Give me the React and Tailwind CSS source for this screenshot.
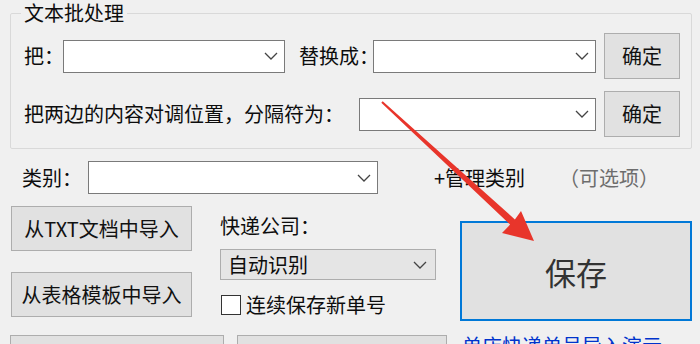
import React from 'react';

const font = { fontFamily: '"Noto Sans CJK SC", "Noto Sans", sans-serif' };

const Chevron = () => (
  <svg width="14" height="8" viewBox="0 0 14 8" className="shrink-0">
    <polyline points="1,1 7,7 13,1" fill="none" stroke="#444" strokeWidth="1.3" />
  </svg>
);

const Combo = ({ className = '' }) => (
  <div className={`shrink-0 h-[33px] bg-white border border-[#7a7a7a] flex items-center justify-end pr-[6px] ${className}`}>
    <Chevron />
  </div>
);

const Btn = ({ children, className = '' }) => (
  <div className={`shrink-0 whitespace-nowrap bg-[#e1e1e1] border border-[#adadad] flex items-center justify-center text-[#111] ${className}`}>
    {children}
  </div>
);

const Arrow = () => (
  <svg className="absolute left-0 top-0 pointer-events-none" width="700" height="344" viewBox="0 0 700 344">
    <polygon
      points="381.3,102.7 510.1,224.6 502,233 534,241 521,211 514.9,219.4 382.7,101.3"
      fill="#e8352b"
    />
  </svg>
);

export default function App() {
  return (
    <div className="relative w-[700px] h-[344px] overflow-hidden bg-[#f0f0f0] text-[20px] leading-none text-[#0d0d0d] whitespace-nowrap" style={font}>
      {/* group box */}
      <fieldset className="ml-[10px] mr-[8px] border border-[#d9d9d9] rounded-[2px] pl-[13px] pr-[11px] pb-[11px]">
        <legend className="px-[3px] ml-[-3px] text-[20px] leading-[26px]">文本批处理</legend>
        <div className="flex items-center h-[46px] mt-[7px]">
          <span className="w-[39px] shrink-0">把：</span>
          <Combo className="w-[222px]" />
          <span className="ml-[14px] w-[74px] shrink-0">替换成：</span>
          <Combo className="w-[223px]" />
          <Btn className="ml-[8px] w-[76px] h-[46px]">确定</Btn>
        </div>
        <div className="flex items-center h-[46px] mt-[12px]">
          <span className="w-[335px] shrink-0">把两边的内容对调位置，分隔符为：</span>
          <Combo className="w-[237px]" />
          <Btn className="ml-[8px] w-[76px] h-[46px]">确定</Btn>
        </div>
      </fieldset>

      {/* category row */}
      <div className="flex items-center h-[33px] mt-[12px] ml-[22px]">
        <span className="w-[66px] shrink-0">类别：</span>
        <Combo className="w-[290px]" />
        <span className="ml-[56px]">+管理类别</span>
        <span className="ml-[34px] text-[#6d6d6d]">（可选项）</span>
      </div>

      {/* middle */}
      <div className="flex items-start mt-[12px]">
        <div className="ml-[11px] w-[181px] shrink-0 flex flex-col gap-[21px]">
          <Btn className="h-[45px]">从TXT文档中导入</Btn>
          <Btn className="h-[45px]">从表格模板中导入</Btn>
        </div>
        <div className="ml-[28px] w-[216px] shrink-0 flex flex-col">
          <div className="h-[26px] mt-[7px] flex items-center">快递公司：</div>
          <div className="h-[31px] mt-[10px] bg-[#e5e5e5] border border-[#adadad] flex items-center justify-between pl-[7px] pr-[8px]">
            <span>自动识别</span>
            <Chevron />
          </div>
          <div className="h-[26px] mt-[12px] flex items-center">
            <div className="w-[20px] h-[20px] bg-white border border-[#333] ml-[1px]" />
            <span className="ml-[5px]">连续保存新单号</span>
          </div>
        </div>
        <div className="ml-[24px] mt-[15px] w-[232px] h-[100px] shrink-0 border-2 border-[#0078d7] bg-[#e1e1e1] flex items-center justify-center text-[31px] text-[#333]">
          保存
        </div>
      </div>

      {/* bottom row */}
      <div className="flex items-start mt-[14px]">
        <Btn className="ml-[10px] w-[214px] h-[45px]">批量导入</Btn>
        <Btn className="ml-[13px] w-[210px] h-[45px]">单号导入</Btn>
        <span className="ml-[15px] mt-[1px] text-[#0033cc] underline">单店快递单号导入演示</span>
      </div>

      <Arrow />
    </div>
  );
}
